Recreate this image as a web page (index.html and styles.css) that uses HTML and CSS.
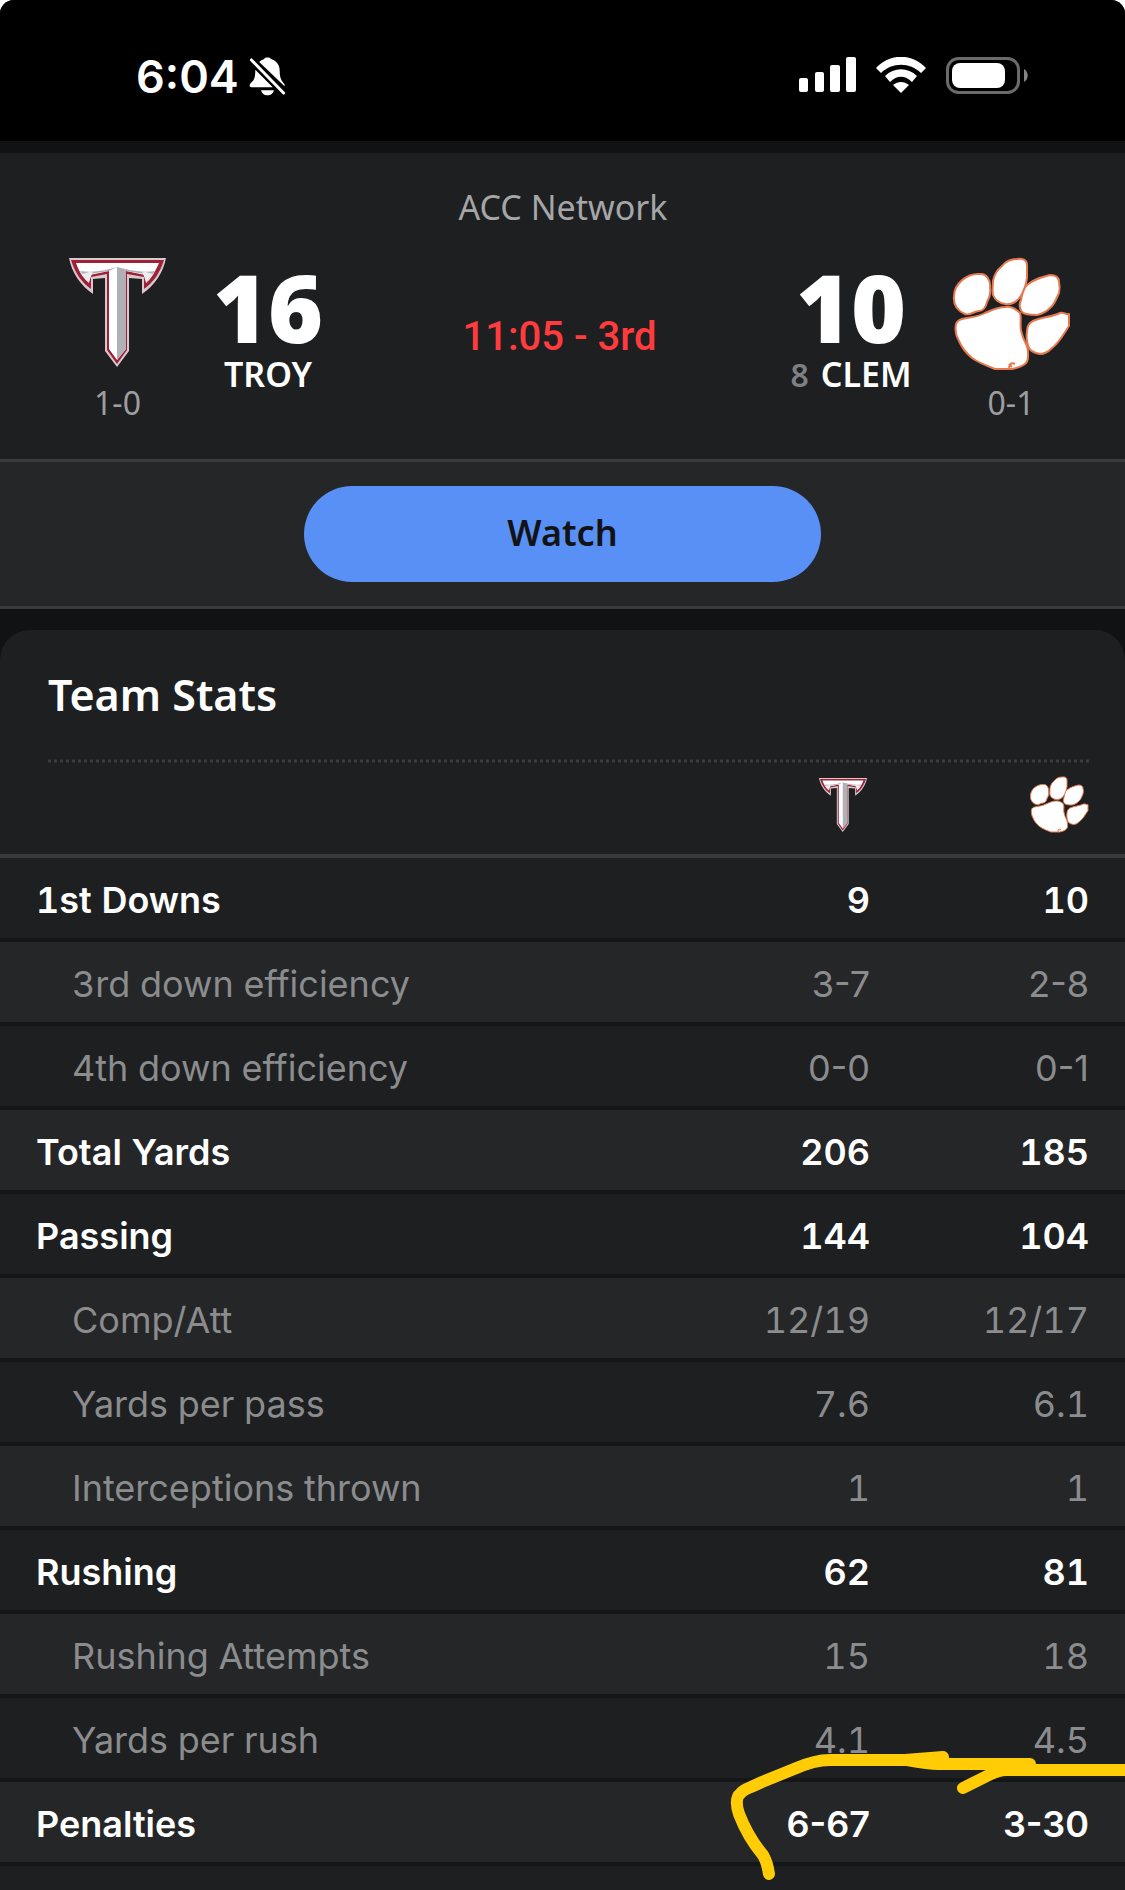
FILE: index.html
```html
<!DOCTYPE html>
<html lang="en">
<head>
<meta charset="utf-8">
<meta name="viewport" content="width=device-width, initial-scale=1">
<title>Troy at Clemson – Team Stats</title>
<link rel="stylesheet" href="styles.css">
</head>
<body>
<svg class="defs" aria-hidden="true">
  <defs>
    <symbol id="troy" viewBox="0 0 97 109">
      <path d="M0 0H97C94 15 86 27 73 36V21L60 20V93L48 109L36 93V20L24 21V36C11 27 3 15 0 0Z" fill="#d9c9cd"/>
      <path d="M2 2H95C91 15 84 25 75 31V19L58 16V92L48 106L38 92V16L22 19V31C13 25 6 15 2 2Z" fill="#9e2138"/>
      <path d="M7 5H90C86 14 82 21 77 25L76 17L57 13V91L48 102L40 91V13L21 17L20 25C15 21 10 14 7 5Z" fill="#fff"/>
      <path d="M48 9L40 13L21 16L20 24L11 13C25 15 38 12 48 9ZM48 9C60 12 72 15 86 13L77 24L76 16L57 13V91L48 102Z" fill="#afb1b5"/>
      <path d="M20 24L13 16L24 13ZM77 24L84 16L73 13Z" fill="#ededef"/>
    </symbol>
    <symbol id="paw" viewBox="0 0 118 114">
      <g fill="#fff" stroke="#e57a52" stroke-width="2" stroke-linejoin="round">
        <path d="M13 57C6 54 1 48 2 39C2 27 15 16 28 17C34 16 39 23 38 31C39 36 38 40 35 45C34 50 31 54 27 54C22 54 18 59 13 57Z"/>
        <path d="M65 2C71 1 75 3 75 8V21C74 28 72 35 68 40C65 45 59 48 53 47C47 46 43 43 41 38C40 34 41 29 41 24C42 18 45 13 50 9C54 4 59 2 65 2Z"/>
        <path d="M98 18C103 18 107 20 107 25C108 29 108 32 107 36C104 42 103 47 98 51C94 55 90 57 85 58C79 58 73 58 70 55C67 51 67 47 69 43C70 37 71 32 75 28C82 22 90 20 98 18Z"/>
        <path d="M108 56C112 55 114 58 117 57V69C111 78 107 86 100 91C96 95 92 97 88 97C83 96 79 95 77 91C75 86 74 80 75 74C75 70 77 66 81 64C90 60 100 60 108 56Z"/>
        <path d="M53 50C59 49 64 52 68 56C70 62 67 70 70 77C71 83 76 88 76 95C76 99 77 103 74 106C70 110 65 111 60 112H43C35 109 27 106 20 101C14 96 10 91 7 84C4 79 3 72 4 67C5 64 7 63 10 62C18 60 26 60 33 56C40 53 46 50 53 50Z"/>
      </g>
      <path d="M57 112C57 107 59 105 63 107M57 107L60 110" fill="none" stroke="#e57a52" stroke-width="2"/>
    </symbol>
  </defs>
</svg>
<div class="screen">
  <header class="status">
    <div class="clock">
      <span>6:04</span>
      <svg width="37" height="40" viewBox="0 0 37 40" role="img" aria-label="Silent">
        <path d="M10 5C12 3 14 3 15 2C16 0 21 0 22 2C28 4 31 8 31 14C31 22 33 24 36 28V30L10 5ZM6 13L24 31H2C-1 31 0 27 3 25C5 23 6 20 6 13ZM12 34H25C24 41 13 41 12 34Z" fill="#fff"/>
        <path d="M2 3L35 37" stroke="#000" stroke-width="7"/>
        <path d="M2 3L35 37" stroke="#fff" stroke-width="3" stroke-linecap="round"/>
      </svg>
    </div>
    <div class="signals">
      <svg width="57" height="35" viewBox="0 0 57 35" role="img" aria-label="Cellular signal">
        <g fill="#fff"><rect y="21" width="9" height="14" rx="2"/><rect x="16" y="15" width="9" height="20" rx="2"/><rect x="31" y="8" width="10" height="27" rx="2"/><rect x="47" width="10" height="35" rx="2"/></g>
      </svg>
      <svg width="50" height="36" viewBox="0 0 50 36" role="img" aria-label="Wi-Fi">
        <g fill="#fff"><path d="M0 11C14-4 36-4 50 11L45 16C34 5 16 5 5 16Z"/><path d="M9 19C18 10 32 10 41 19L36 25C29 18 21 18 14 25Z"/><path d="M17 28C22 24 28 24 33 28L25 36Z"/></g>
      </svg>
      <svg width="82" height="37" viewBox="0 0 82 37" role="img" aria-label="Battery">
        <rect x="1.500" y="1.500" width="71" height="34" rx="11" fill="none" stroke="#6b6b6b" stroke-width="3"/>
        <rect x="6" y="6" width="53" height="25" rx="8" fill="#fff"/>
        <path d="M78 12C83 15 83 22 78 25Z" fill="#858585"/>
      </svg>
    </div>
  </header>

  <section class="score" aria-label="Score">
    <p class="network">ACC Network</p>
    <div class="match">
      <div class="side">
        <svg class="logo logo-troy" role="img" aria-label="Troy"><use href="#troy"/></svg>
        <span class="record">1-0</span>
      </div>
      <div class="team">
        <strong>16</strong>
        <span class="name">TROY</span>
      </div>
      <p class="time">11:05 - 3rd</p>
      <div class="team">
        <strong>10</strong>
        <span class="name"><small>8</small>CLEM</span>
      </div>
      <div class="side">
        <svg class="logo logo-paw" role="img" aria-label="Clemson"><use href="#paw"/></svg>
        <span class="record">0-1</span>
      </div>
    </div>
  </section>

  <div class="actions"><button type="button">Watch</button></div>

  <main class="card">
    <h1>Team Stats</h1>
    <svg class="dots" aria-hidden="true"><line x1="0" y1="2" x2="100%" y2="2"/></svg>
    <div class="table-wrap">
      <table>
        <thead>
          <tr>
            <th></th>
            <th scope="col"><svg class="mini mini-troy" role="img" aria-label="Troy"><use href="#troy"/></svg></th>
            <th scope="col"><svg class="mini mini-paw" role="img" aria-label="Clemson"><use href="#paw"/></svg></th>
          </tr>
        </thead>
        <tbody>
          <tr><th scope="row">1st Downs</th><td>9</td><td>10</td></tr>
          <tr class="sub pair"><th scope="row">3rd down efficiency</th><td>3-7</td><td>2-8</td></tr>
          <tr class="sub pair"><th scope="row">4th down efficiency</th><td>0-0</td><td>0-1</td></tr>
          <tr><th scope="row">Total Yards</th><td>206</td><td>185</td></tr>
          <tr><th scope="row">Passing</th><td>144</td><td>104</td></tr>
          <tr class="sub"><th scope="row">Comp/Att</th><td>12/19</td><td>12/17</td></tr>
          <tr class="sub"><th scope="row">Yards per pass</th><td>7.6</td><td>6.1</td></tr>
          <tr class="sub"><th scope="row">Interceptions thrown</th><td>1</td><td>1</td></tr>
          <tr><th scope="row">Rushing</th><td>62</td><td>81</td></tr>
          <tr class="sub"><th scope="row">Rushing Attempts</th><td>15</td><td>18</td></tr>
          <tr class="sub"><th scope="row">Yards per rush</th><td>4.1</td><td>4.5</td></tr>
          <tr class="pair"><th scope="row">Penalties</th><td>6-67</td><td>3-30</td></tr>
        </tbody>
      </table>
      <svg class="marker" viewBox="0 0 425 140" aria-hidden="true">
        <g fill="none" stroke="#ffcc05" stroke-width="12" stroke-linecap="round" stroke-linejoin="round">
          <path d="M69 124C68 117 67 112 63 105C52 92 44 77 39 64C36 56 36 47 40 44C42 41 46 39 51 37L62 32L94 19C103 15 118 10 130 10H205L243 7M207 10C218 12 229 14 238 14H330"/>
          <path d="M263 38L289 25C297 21 301 20 306 20H430"/>
        </g>
      </svg>
    </div>
  </main>
</div>
</body>
</html>
```
FILE: styles.css
```css
* { box-sizing: border-box; }

body {
  margin: 0;
  background: #fff;
  color: #fff;
  font-family: Inter, "Liberation Sans", sans-serif;
}

p, h1 { margin: 0; }
svg { display: block; }
.defs { position: absolute; width: 0; height: 0; }

.screen {
  display: flex;
  flex-direction: column;
  min-height: 100vh;
  overflow: hidden;
  background: #111214;
  border-radius: 14px 14px 0 0;
}

/* Status bar */
.status {
  display: flex;
  justify-content: space-between;
  height: 141px;
  padding: 56px 97px 0 136px;
  background: #000;
}
.clock {
  display: flex;
  align-items: flex-start;
  gap: 10px;
  font-size: 45px;
  font-weight: 600;
  line-height: 42px;
}
.signals { display: flex; gap: 20px; }
.signals, .clock svg { padding-top: 1px; }

/* Scoreboard */
.score {
  margin-top: 12px;
  padding: 32px 55px 36px 68px;
  background: #1e1f21;
  border-bottom: 3px solid #3a3b3d;
}
.network {
  padding-right: 12px;
  color: #a5a6a8;
  font-family: "Noto Sans", sans-serif;
  font-size: 34px;
  line-height: 44px;
  text-align: center;
}
.match {
  display: grid;
  grid-template-columns: 99px 202px 1fr 202px 118px;
  padding-top: 28px;
}
.side { display: flex; flex-direction: column; align-items: center; }
.logo-troy { width: 97px; height: 109px; margin-top: 1px; }
.logo-paw { width: 118px; height: 114px; }
.record {
  margin-top: auto;
  color: #9d9ea0;
  font-family: "Noto Sans", sans-serif;
  font-size: 32px;
  line-height: 40px;
}
.team {
  display: flex;
  flex-direction: column;
  align-items: center;
  height: 166px;
  padding-top: 6px;
}
.team strong {
  font-family: "Open Sans", sans-serif;
  font-size: 94px;
  font-weight: 800;
  line-height: 88px;
}
.name {
  font-family: "Noto Sans", sans-serif;
  font-size: 34px;
  font-weight: 600;
  line-height: 46px;
}
.name small {
  margin-right: 12px;
  color: #7f8082;
  font-size: 32px;
}
.time {
  padding-top: 54px;
  color: #ff3b3e;
  font-family: Roboto, sans-serif;
  font-size: 40px;
  font-weight: 500;
  line-height: 52px;
  text-align: center;
}

/* Watch */
.actions {
  display: flex;
  justify-content: center;
  padding: 24px 0;
  background: #252628;
  border-bottom: 3px solid #3a3b3d;
}
.actions button {
  width: 46%;
  height: 96px;
  padding-bottom: 3px;
  border: 0;
  border-radius: 48px;
  background: #5990f6;
  color: #121315;
  font: 600 36px/44px "Noto Sans", sans-serif;
}

/* Team stats */
.card {
  flex: 1;
  margin-top: 21px;
  background: #1e1f21;
  border-radius: 30px 30px 0 0;
}
.card h1 {
  padding: 39px 48px 38px;
  font-family: "Noto Sans", sans-serif;
  font-size: 43px;
  font-weight: 600;
  line-height: 52px;
}
.dots {
  width: calc(100% - 84px);
  height: 4px;
  margin-left: 48px;
}
.dots line { stroke: #3c3d3f; stroke-width: 3; stroke-dasharray: 3 3; }

.table-wrap { position: relative; padding-bottom: 24px; }
table {
  width: 100%;
  border-collapse: separate;
  border-spacing: 0;
  table-layout: fixed;
}
thead th {
  height: 95px;
  padding: 0 36px 8px 0;
  border-bottom: 4px solid #3a3b3d;
}
thead th:first-child { width: 62%; }
thead th:last-child { width: 219px; }
.mini { margin-left: auto; }
.mini-troy { width: 50px; height: 54px; margin-right: 2px; }
.mini-paw { width: 60px; height: 57px; }

tbody th, tbody td {
  height: 84px;
  padding: 4px 36px 0 0;
  border-bottom: 4px solid #151618;
  font-size: 36px;
  font-weight: 600;
  line-height: 44px;
  text-align: right;
  font-variant-numeric: tabular-nums;
}
tbody th { padding-left: 36px; text-align: left; }
tbody tr:nth-child(even) { background: #252628; }
.sub th, .sub td { color: #8b8c8e; font-weight: 400; }
.sub th { padding-left: 72px; }
.pair td { font-variant-numeric: normal; }

/* Hand-drawn highlight laid over the last rows */
.marker {
  position: absolute;
  right: 0;
  bottom: 0;
  width: 425px;
  height: 140px;
  overflow: hidden;
}
```
